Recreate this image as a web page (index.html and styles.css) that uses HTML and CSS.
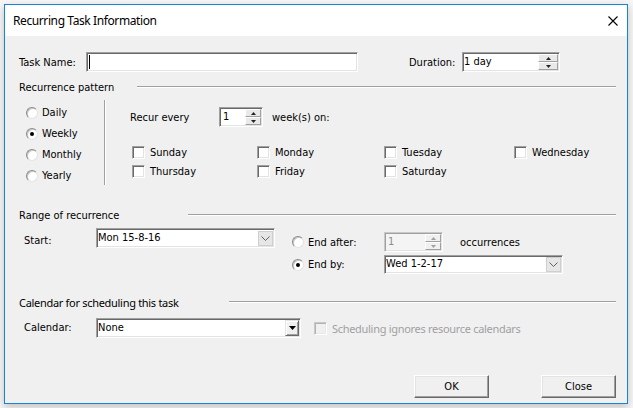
FILE: index.html
```html
<!DOCTYPE html>
<html>
<head>
<meta charset="utf-8">
<title>Recurring Task Information</title>
<link rel="stylesheet" href="styles.css">
</head>
<body>
<div class="window">
  <div class="titlebar">
    <span class="title">Recurring Task Information</span>
    <svg class="close-x" width="10" height="10" viewBox="0 0 10 10"><path d="M0.5 0.5 L9.5 9.5 M9.5 0.5 L0.5 9.5" stroke="#000" stroke-width="1.1" fill="none"/></svg>
  </div>
  <div class="content">
    <div class="row-task">
      <span class="lbl-task">Task Name:</span>
      <div class="field field-task"><span class="caret"></span></div>
      <span class="lbl-duration">Duration:</span>
      <div class="field field-duration">
        <span class="value">1 day</span>
        <div class="spin">
          <span class="spin-btn"><svg width="5" height="3" viewBox="0 0 5 3"><path d="M0 3 L2.5 0 L5 3Z" fill="#222"/></svg></span>
          <span class="spin-btn"><svg width="5" height="3" viewBox="0 0 5 3"><path d="M0 0 L5 0 L2.5 3Z" fill="#222"/></svg></span>
        </div>
      </div>
    </div>

    <div class="group-head head-pattern"><span class="head-text">Recurrence pattern</span><span class="head-line"></span></div>

    <div class="pattern">
      <div class="radios">
        <div class="radio-row"><span class="radio"></span><span>Daily</span></div>
        <div class="radio-row"><span class="radio checked"></span><span>Weekly</span></div>
        <div class="radio-row"><span class="radio"></span><span>Monthly</span></div>
        <div class="radio-row"><span class="radio"></span><span>Yearly</span></div>
      </div>
      <div class="vsep"></div>
      <div class="weekly">
        <div class="recur-row">
          <span class="recur-lbl">Recur every</span>
          <div class="field field-recur">
            <span class="value">1</span>
            <div class="spin">
              <span class="spin-btn"><svg width="5" height="3" viewBox="0 0 5 3"><path d="M0 3 L2.5 0 L5 3Z" fill="#222"/></svg></span>
              <span class="spin-btn"><svg width="5" height="3" viewBox="0 0 5 3"><path d="M0 0 L5 0 L2.5 3Z" fill="#222"/></svg></span>
            </div>
          </div>
          <span class="weeks-lbl">week(s) on:</span>
        </div>
        <div class="days">
          <div class="day"><span class="check"></span><span>Sunday</span></div>
          <div class="day"><span class="check"></span><span>Monday</span></div>
          <div class="day"><span class="check"></span><span>Tuesday</span></div>
          <div class="day"><span class="check"></span><span>Wednesday</span></div>
          <div class="day"><span class="check"></span><span>Thursday</span></div>
          <div class="day"><span class="check"></span><span>Friday</span></div>
          <div class="day"><span class="check"></span><span>Saturday</span></div>
        </div>
      </div>
    </div>

    <div class="group-head head-range"><span class="head-text">Range of recurrence</span><span class="head-line"></span></div>

    <div class="range">
      <div class="range-start">
        <span class="lbl-start">Start:</span>
        <div class="field combo combo-start">
          <span class="value">Mon 15-8-16</span>
          <span class="dd-btn"><svg width="9" height="5" viewBox="0 0 9 5"><path d="M0.5 0.5 L4.5 4.5 L8.5 0.5" stroke="#606060" fill="none"/></svg></span>
        </div>
      </div>
      <div class="range-end">
        <div class="radio-row"><span class="radio"></span><span>End after:</span></div>
        <div class="after-cell">
          <div class="field field-after disabled">
            <span class="value">1</span>
            <div class="spin">
              <span class="spin-btn"><svg width="5" height="3" viewBox="0 0 5 3"><path d="M0 3 L2.5 0 L5 3Z" fill="#a0a0a0"/></svg></span>
              <span class="spin-btn"><svg width="5" height="3" viewBox="0 0 5 3"><path d="M0 0 L5 0 L2.5 3Z" fill="#a0a0a0"/></svg></span>
            </div>
          </div>
          <span class="occ-lbl">occurrences</span>
        </div>
        <div class="radio-row"><span class="radio checked"></span><span>End by:</span></div>
        <div class="field combo combo-end">
          <span class="value">Wed 1-2-17</span>
          <span class="dd-btn"><svg width="9" height="5" viewBox="0 0 9 5"><path d="M0.5 0.5 L4.5 4.5 L8.5 0.5" stroke="#606060" fill="none"/></svg></span>
        </div>
      </div>
    </div>

    <div class="group-head head-cal"><span class="head-text alt-font">Calendar for scheduling this task</span><span class="head-line"></span></div>

    <div class="cal-row">
      <span class="lbl-start">Calendar:</span>
      <div class="field combo combo-cal">
        <span class="value">None</span>
        <span class="dd-classic"><svg width="7" height="4" viewBox="0 0 7 4"><path d="M0 0 H7 L3.5 4Z" fill="#000"/></svg></span>
      </div>
      <span class="check check-disabled"></span>
      <span class="sched-lbl alt-font">Scheduling ignores resource calendars</span>
    </div>

    <div class="buttons">
      <span class="btn">OK</span>
      <span class="btn">Close</span>
    </div>
  </div>
</div>
</body>
</html>
```

FILE: styles.css
```css
* { box-sizing: border-box; }
html, body { margin: 0; padding: 0; }
body {
  width: 633px;
  height: 408px;
  overflow: hidden;
  background: #f6f6f6;
  font-family: "DejaVu Sans Condensed", "DejaVu Sans", sans-serif;
  font-stretch: condensed;
  font-size: 11px;
  color: #000;
}
.window {
  margin: 4px 0 0 4px;
  width: 624px;
  height: 400px;
  border: 1px solid #1883d7;
  background: #f0f0f0;
  box-shadow: 0 3px 8px rgba(0,0,0,0.22);
  display: flex;
  flex-direction: column;
}
.titlebar {
  height: 31px;
  flex: none;
  background: #fff;
  display: flex;
  align-items: center;
  justify-content: space-between;
  padding: 0 9px 0 8px;
}
.title {
  font-family: "Noto Sans", sans-serif;
  font-stretch: normal;
  font-size: 12px;
  letter-spacing: -0.4px;
}
.close-x { display: block; }
.content {
  flex: 1;
  padding: 0 11px 0 14px;
}

/* generic sunken field */
.field {
  position: relative;
  height: 20px;
  background: #fff;
  border: 1px solid;
  border-color: #a0a0a0 #fff #fff #a0a0a0;
  box-shadow: inset 1px 1px 0 #696969, inset -1px -1px 0 #e3e3e3;
  display: flex;
  align-items: center;
}
.field .value { flex: 1; padding-left: 1px; line-height: 16px; margin-top: -1px; }
.spin {
  align-self: stretch;
  display: flex;
  flex-direction: column;
  padding: 1px 1px 1px 0;
}
.spin-btn {
  flex: 1;
  width: 16px;
  display: flex;
  align-items: center;
  justify-content: center;
  background: #e9e9e9;
  border: 1px solid;
  border-color: #fff #a0a0a0 #a0a0a0 #fff;
}
.spin-btn svg { display: block; }

/* row 1 */
.row-task {
  margin-top: 16px;
  display: flex;
  align-items: center;
}
.lbl-task { width: 67px; padding-left: 0; }
.field-task { width: 272px; }
.caret {
  position: absolute;
  left: 2px;
  top: 2px;
  width: 1px;
  height: 14px;
  background: #000;
}
.lbl-duration { margin-left: 51px; width: 53px; }
.field-duration { width: 98px; }
.field-duration .spin-btn { width: 20px; }

/* group headers */
.group-head {
  display: flex;
  align-items: center;
  height: 14px;
}
.head-text { flex: none; white-space: nowrap; }
.head-line {
  flex: 1;
  height: 2px;
  border-top: 1px solid #a0a0a0;
  border-bottom: 1px solid #fff;
  margin-top: -1px;
}
.head-pattern { margin-top: 8px; }
.head-pattern .head-text { width: 118px; }
.head-range { margin-top: 22px; }
.head-range .head-text { width: 169px; }
.head-cal { margin-top: 21px; }
.head-cal .head-text { width: 210px; }
.alt-font {
  font-family: "Noto Sans", sans-serif;
  font-stretch: normal;
  font-size: 11px;
  letter-spacing: -0.3px;
}

/* radios */
.radio {
  flex: none;
  width: 12px;
  height: 12px;
  border-radius: 50%;
  background: #fff;
  border: 1px solid;
  border-color: #8a8a8a #e3e3e3 #e3e3e3 #8a8a8a;
  box-shadow: inset 1px 1px 0 #c8c8c8;
  display: flex;
  align-items: center;
  justify-content: center;
}
.radio.checked::after {
  content: "";
  width: 4px;
  height: 4px;
  border-radius: 50%;
  background: #000;
}
.radio-row {
  display: flex;
  align-items: center;
  gap: 4px;
  height: 21px;
}

/* recurrence pattern */
.pattern {
  margin-top: 6px;
  display: flex;
  height: 86px;
}
.radios {
  width: 85px;
  padding: 2px 0 0 7px;
}
.vsep {
  width: 2px;
  height: 85px;
  border-left: 1px solid #a0a0a0;
  border-right: 1px solid #fff;
}
.weekly { padding-left: 24px; }
.recur-row {
  margin-top: 7px;
  display: flex;
  align-items: center;
}
.recur-lbl { width: 89px; }
.field-recur { width: 44px; }
.field-recur .value { padding-left: 3px; }
.weeks-lbl { margin-left: 9px; }
.days {
  margin-top: 16px;
  margin-left: 2px;
  display: grid;
  grid-template-columns: 125px 127px 130px auto;
  grid-auto-rows: 19px;
}
.day {
  display: flex;
  align-items: center;
  gap: 5px;
}
.check {
  flex: none;
  width: 13px;
  height: 13px;
  background: #fff;
  border: 1px solid;
  border-color: #a0a0a0 #fff #fff #a0a0a0;
  box-shadow: inset 1px 1px 0 #696969, inset -1px -1px 0 #e3e3e3;
}

/* range */
.range {
  margin-top: 6px;
  display: flex;
}
.range-start { display: flex; align-items: flex-start; }
.lbl-start { width: 77px; padding-left: 5px; line-height: 20px; }
.range-start .lbl-start { padding-top: 3px; }
.combo { justify-content: space-between; }
.combo-start { width: 179px; }
.dd-btn {
  flex: none;
  width: 15px;
  height: 15px;
  margin-right: 1px;
  background: #e6e6e6;
  border: 1px solid #cfcfcf;
  display: flex;
  align-items: center;
  justify-content: center;
}
.dd-btn svg { display: block; }
.range-end {
  margin-left: 17px;
  padding-top: 4px;
  display: grid;
  grid-template-columns: 92px auto;
  row-gap: 3px;
  align-items: center;
}
.range-end .radio-row { height: 19px; }
.after-cell { display: flex; align-items: center; }
.field-after { width: 59px; }
.field.disabled {
  background: #f4f4f4;
  border-color: #c8c8c8 #fff #fff #c8c8c8;
  box-shadow: inset 1px 1px 0 #a0a0a0, inset -1px -1px 0 #e3e3e3;
  color: #8c8c8c;
}
.field-after .value { padding-left: 3px; }
.field-after .spin-btn { background: #f0f0f0; }
.occ-lbl { margin-left: 17px; }
.combo-end { width: 179px; height: 19px; }

/* calendar */
.cal-row {
  margin-top: 9px;
  display: flex;
  align-items: center;
}
.combo-cal { width: 205px; }
.dd-classic {
  flex: none;
  width: 14px;
  height: 16px;
  margin-right: 1px;
  background: #f0f0f0;
  border: 1px solid;
  border-color: #e3e3e3 #696969 #696969 #e3e3e3;
  box-shadow: inset 1px 1px 0 #fff, inset -1px -1px 0 #a0a0a0;
  display: flex;
  align-items: center;
  justify-content: center;
}
.dd-classic svg { display: block; }
.check-disabled {
  margin-left: 13px;
  background: #f0f0f0;
  border-color: #c8c8c8 #fff #fff #c8c8c8;
  box-shadow: inset 1px 1px 0 #b4b4b4, inset -1px -1px 0 #e9e9e9;
}
.sched-lbl { margin-left: 5px; color: #a0a0a0; }

/* buttons */
.buttons {
  margin-top: 37px;
  display: flex;
  justify-content: flex-end;
  gap: 52px;
}
.btn {
  width: 75px;
  height: 23px;
  display: flex;
  align-items: center;
  justify-content: center;
  background: #f0f0f0;
  border: 1px solid;
  border-color: #fff #696969 #696969 #fff;
  box-shadow: inset -1px -1px 0 #a0a0a0, inset 1px 1px 0 #e3e3e3;
}
```
